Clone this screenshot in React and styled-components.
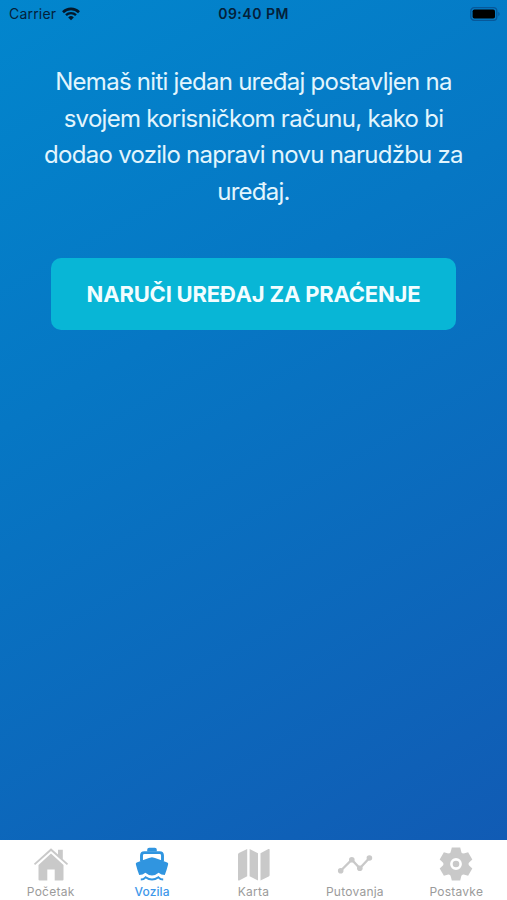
import React, { useState } from "react";
import styled, { createGlobalStyle } from "styled-components";

const GlobalStyle = createGlobalStyle`
  * {
    box-sizing: border-box;
  }

  body {
    margin: 0;
    font-family: Inter, "Liberation Sans", sans-serif;
  }
`;

const Screen = styled.div`
  display: flex;
  flex-direction: column;
  height: 100vh;
  min-height: 900px;
  background: #ffffff;
`;

const Content = styled.main`
  flex: 1;
  display: flex;
  flex-direction: column;
  background: linear-gradient(150deg, #0286cd 0%, #0677c4 38%, #115bb4 100%);
`;

const StatusBar = styled.header`
  display: grid;
  grid-template-columns: 1fr auto 1fr;
  align-items: center;
  height: 27px;
  padding: 0 6px 0 9px;
  color: #04213a;
`;

const Carrier = styled.div`
  display: flex;
  align-items: center;
  gap: 6px;
  font-size: 14px;
  letter-spacing: 0.2px;
`;

const Clock = styled.div`
  margin-left: -3px;
  font-size: 14px;
  font-weight: 600;
  letter-spacing: 0.5px;
`;

const BatterySlot = styled.div`
  display: flex;
  justify-content: flex-end;
`;

const Empty = styled.section`
  display: flex;
  flex-direction: column;
  align-items: center;
  padding: 37px 40px 0;
`;

const Message = styled.p`
  margin: 0 0 47px;
  color: #e2f5fd;
  font-size: 24px;
  line-height: 36.7px;
  letter-spacing: -0.73px;
  text-align: center;
`;

const Line = styled.span`
  display: block;
  white-space: nowrap;
`;

const OrderButton = styled.button`
  width: 405px;
  height: 72px;
  padding: 0;
  border: 0;
  border-radius: 10px;
  background: #08b6d6;
  color: #f2fdff;
  font-family: inherit;
  font-size: 22px;
  font-weight: 650;
  letter-spacing: -0.2px;
  white-space: nowrap;
`;

const TabBar = styled.nav`
  display: grid;
  grid-template-columns: repeat(5, 1fr);
  height: 60px;
  background: #ffffff;
`;

const Tab = styled.button`
  display: flex;
  flex-direction: column;
  align-items: center;
  padding: 6px 0 0;
  border: 0;
  background: none;
  color: ${(props) => (props.$active ? "#3095e0" : "#c9c9c9")};
  font-family: inherit;
`;

const TabLabel = styled.span`
  margin-top: 3px;
  color: ${(props) => (props.$active ? "#3d97ea" : "#9b9b9b")};
  font-size: 12px;
  font-weight: ${(props) => (props.$active ? 500 : 400)};
  line-height: 14px;
  letter-spacing: ${(props) => (props.$active ? "0.1px" : "0.25px")};
`;

const WifiIcon = () => (
  <svg width="18" height="14" viewBox="0 0 18 14" fill="none" stroke="#04182b">
    <path d="M1 5.2a11.4 11.4 0 0 1 16 0" strokeWidth="2.6" />
    <path d="M4 8.2a7.1 7.1 0 0 1 10 0" strokeWidth="2.4" />
    <path d="M9 13.2 6.2 10.4a4 4 0 0 1 5.6 0z" fill="#04182b" stroke="none" />
  </svg>
);

const BatteryIcon = () => (
  <svg width="31" height="14" viewBox="0 0 31 14">
    <rect x="0.8" y="0.7" width="26" height="12.6" rx="3.4" fill="none" stroke="#07589a" strokeWidth="1.3" />
    <rect x="2.6" y="2.4" width="22.4" height="9.2" rx="1.8" fill="#000000" />
    <path d="M28.3 4.8a2.5 2.5 0 0 1 0 4.4z" fill="#07589a" />
  </svg>
);

const HomeIcon = () => (
  <svg width="36" height="36" viewBox="0 0 36 36" fill="currentColor">
    <path d="M18 7.5 30.5 19v14.5a1 1 0 0 1-1 1H21.7V23.5h-7.4v11H6.5a1 1 0 0 1-1-1V19z" />
    <path d="M18 2.2 25 8.5V3.8h4.8v9.1l5.3 4.8-1.2 1.4L18 4.9 2.1 19.1.9 17.7z" />
  </svg>
);

const BoatIcon = () => (
  <svg width="36" height="36" viewBox="0 0 36 36" fill="currentColor">
    <path d="M13.2 5.5V3.8q0-2 2-2h5.6q2 0 2 2v1.7z" />
    <path d="M7.5 15V9.5q0-2.9 2.9-2.9h15.2q2.9 0 2.9 2.9V15" fill="none" stroke="currentColor" strokeWidth="2.9" />
    <path d="M18 11.3q5.5 1.3 15.2 5.200 1.400.6.9 2-1.300 5.300-3.300 10.600-3.600 0-6.200-2.400-6.600 5.600-13.200 0-2.600 2.400-6.200 2.400-2-5.300-3.300-10.600-.5-1.400.9-2Q12.500 12.600 18 11.300z" />
    <path d="M6.800 33.600q2.800-.1 4.800-2.300 6.400 4.600 12.800 0 2 2.200 4.800 2.300" fill="none" stroke="currentColor" strokeWidth="2" />
  </svg>
);

const MapIcon = () => (
  <svg width="36" height="36" viewBox="0 0 36 36" fill="currentColor">
    <path d="M12.2 3v27.2l-8 4.2a.8.8 0 0 1-1.200-.7V8.600q0-1 .9-1.500z" />
    <path d="m14.600 3 8.400 4.200v27.200l-8.400-4.200z" />
    <path d="M25.500 7.200 33.400 3a.8.8 0 0 1 1.200.7v25.200q0 1-.9 1.500l-8.200 4z" />
  </svg>
);

const RouteIcon = () => (
  <svg width="36" height="36" viewBox="0 0 36 36" fill="currentColor">
    <path d="m3.700 24.700 11.100-11 8 8.600 9.600-10.300" fill="none" stroke="currentColor" strokeWidth="2.3" />
    <circle cx="3.7" cy="24.7" r="2.8" />
    <circle cx="14.8" cy="13.7" r="2.8" />
    <circle cx="22.8" cy="22.3" r="2.8" />
    <circle cx="32.4" cy="12" r="2.8" />
  </svg>
);

const GearIcon = () => (
  <svg width="36" height="36" viewBox="-18 -18 36 36" fill="currentColor">
    <circle r="12.6" />
    {[0, 60, 120].map((angle) => (
      <path
        key={angle}
        d="M-4.200-16.400h8.400l1.400 5.400v22l-1.400 5.400h-8.400L-5.600 11v-22z"
        transform={`rotate(${angle})`}
      />
    ))}
    <circle r="4.6" fill="none" stroke="#ffffff" strokeWidth="2.6" />
  </svg>
);

const tabs = [
  { id: "home", label: "Početak", Icon: HomeIcon },
  { id: "vehicles", label: "Vozila", Icon: BoatIcon },
  { id: "map", label: "Karta", Icon: MapIcon },
  { id: "trips", label: "Putovanja", Icon: RouteIcon },
  { id: "settings", label: "Postavke", Icon: GearIcon },
];

const App = () => {
  const [active, setActive] = useState("vehicles");

  return (
    <Screen>
      <GlobalStyle />
      <Content>
        <StatusBar>
          <Carrier>
            Carrier <WifiIcon />
          </Carrier>
          <Clock>09:40 PM</Clock>
          <BatterySlot>
            <BatteryIcon />
          </BatterySlot>
        </StatusBar>
        <Empty>
          <Message>
            <Line>Nemaš niti jedan uređaj postavljen na</Line>
            <Line>svojem korisničkom računu, kako bi</Line>
            <Line>dodao vozilo napravi novu narudžbu za</Line>
            <Line>uređaj.</Line>
          </Message>
          <OrderButton>NARUČI UREĐAJ ZA PRAĆENJE</OrderButton>
        </Empty>
      </Content>
      <TabBar>
        {tabs.map(({ id, label, Icon }) => (
          <Tab key={id} $active={id === active} onClick={() => setActive(id)}>
            <Icon />
            <TabLabel $active={id === active}>{label}</TabLabel>
          </Tab>
        ))}
      </TabBar>
    </Screen>
  );
};

export default App;
